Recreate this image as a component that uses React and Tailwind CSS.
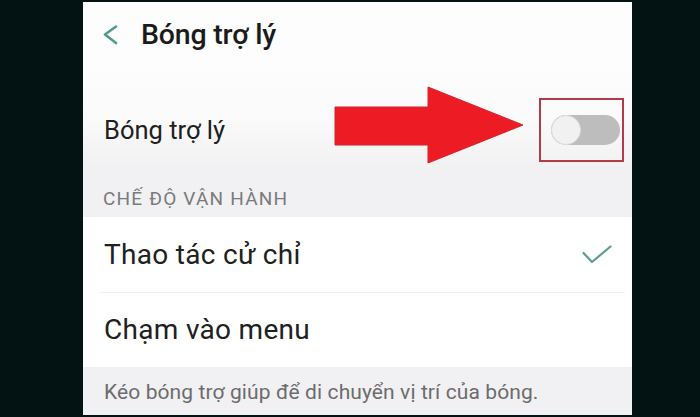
import React from "react";

// Cài đặt "Bóng trợ lý" với mũi tên chú thích chỉ vào công tắc
export default function App() {
  const font = { fontFamily: "Roboto, 'Noto Sans', sans-serif" };

  return (
    <div className="relative w-[700px] h-[417px] bg-[#031313] pl-[83px] pt-[2px]" style={font}>
      <div className="w-[549px] h-[413px] bg-[#fdfdfd] flex flex-col">
        {/* Thanh tiêu đề */}
        <div className="h-[66px] flex items-center pl-[20px] gap-[22px]">
          <svg width="16" height="20" viewBox="0 0 16 20" fill="none">
            <path d="M13 1.5 L2 9.5 L13 18" stroke="#4f9c85" strokeWidth="2.6" strokeLinecap="round" strokeLinejoin="round" />
          </svg>
          <span className="text-[28.5px] font-medium text-[#1b1b1b] tracking-[-0.2px]">Bóng trợ lý</span>
        </div>

        {/* Hàng công tắc */}
        <div className="h-[100px] pt-[24px] flex items-center justify-between pl-[21px] pr-[8px] bg-gradient-to-b from-[#fdfdfd] via-[#fafafa] to-[#f1f1f2]">
          <span className="text-[25.5px] text-[#202020]">Bóng trợ lý</span>
          <div className="w-[85px] h-[64px] border-2 border-[#b13b49] flex items-center pl-[10px]">
            <div className="w-[69px] h-[30px] rounded-full bg-[#bdbdbd] flex items-center">
              <div className="w-[30px] h-[30px] rounded-full bg-[#f1f1f1] border border-[#dcdcdc]" />
            </div>
          </div>
        </div>

        {/* Tiêu đề nhóm */}
        <div className="h-[49px] pt-[14px] flex items-center pl-[20px] bg-[#f1f1f3]">
          <span className="text-[19px] tracking-[1.2px] text-[#7a7a7a] uppercase">Chế độ vận hành</span>
        </div>

        {/* Tùy chọn */}
        <div className="h-[75px] flex items-center justify-between pl-[21px] pr-[20px] bg-white">
          <span className="text-[28px] tracking-[0.3px] text-[#202020]">Thao tác cử chỉ</span>
          <svg width="30" height="20" viewBox="0 0 30 20" fill="none">
            <path d="M1.5 8 L10 17 L28.5 1.5" stroke="#5b9f8a" strokeWidth="2.2" strokeLinecap="round" strokeLinejoin="round" />
          </svg>
        </div>
        <div className="h-px bg-[#f0f0f0] ml-[17px] mr-[7px]" />
        <div className="h-[74px] flex items-center pl-[21px] bg-white">
          <span className="text-[28px] tracking-[0.3px] text-[#202020]">Chạm vào menu</span>
        </div>

        {/* Chú thích */}
        <div className="flex-1 flex items-center pl-[21px] pt-[3px] bg-[#f1f1f3]">
          <span className="text-[21px] tracking-[0.1px] text-[#6c6c6c]">Kéo bóng trợ giúp để di chuyển vị trí của bóng.</span>
        </div>
      </div>

      {/* Mũi tên đỏ chú thích */}
      <svg className="absolute left-[333px] top-[85px]" width="192" height="80" viewBox="0 0 192 80">
        <polygon points="2,22 95,22 95,2 190,40 95,78 95,60 2,60" fill="#ed1c24" stroke="#d8232a" strokeWidth="1" />
      </svg>
    </div>
  );
}
